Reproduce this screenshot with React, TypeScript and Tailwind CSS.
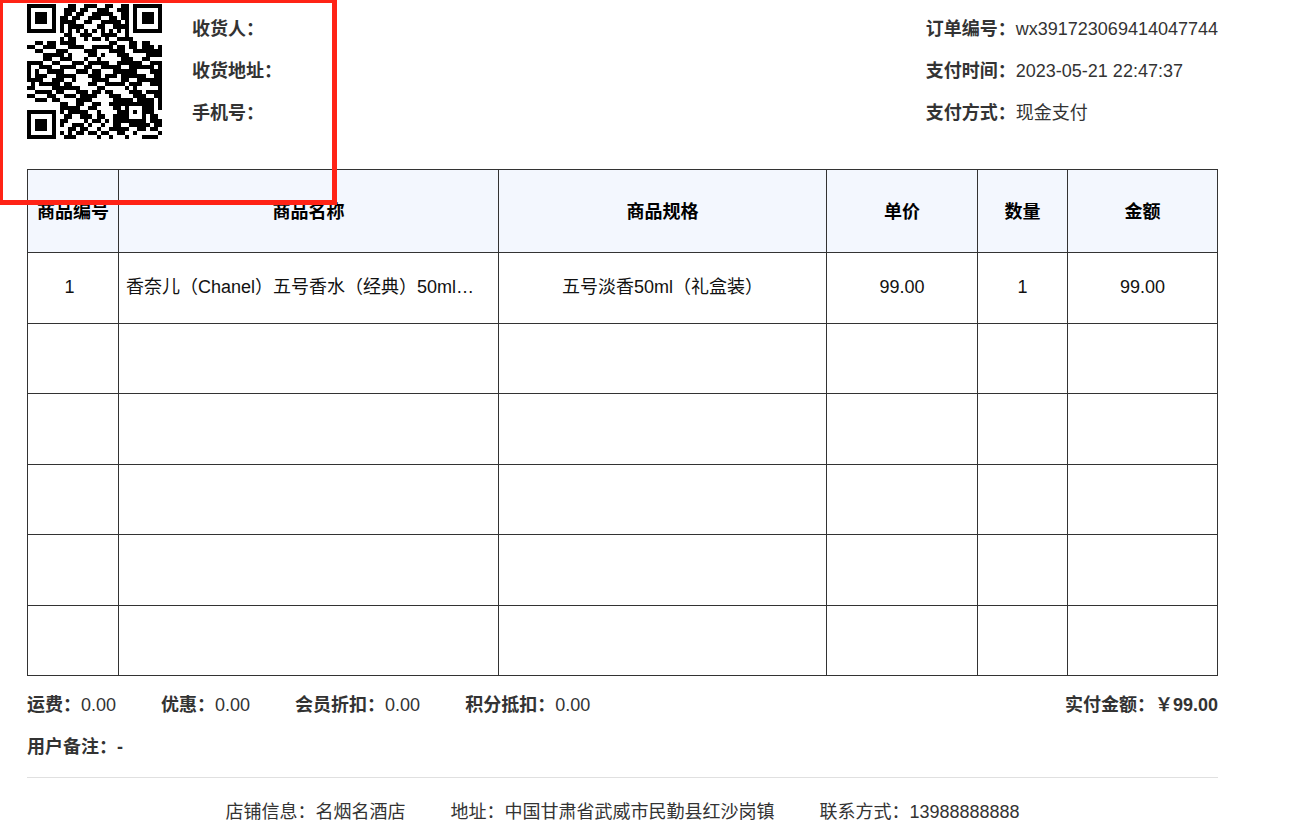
import React from "react";

const raw = [
  "000000000011001110011001100000000",
  "000000000111011001110011100000000",
  "000000000110110011111001100000000",
  "000000001101100111001101100000000",
  "000000001111001100111110100000000",
  "000000001011110001100111100000000",
  "000000001010101010101010100000000",
  "000000000110011100111100100000000",
  "000000001011001011010011110000000",
  "001101101111000000001100011011000",
  "110011100011110011111011011011101",
  "001100011100001110001111001111111",
  "000011111010000110100011100001111",
  "000011001110001001000001110011000",
  "111100110001110111110011111100111",
  "100111001111001100111110011111101",
  "101001111000111011000111111000111",
  "101110011111000111011101111110011",
  "111100111001000011110001100111111",
  "010111110110000110011111011100111",
  "110000111111100001100000101000001",
  "001111011000111011011000011101111",
  "110001100111011110001110001110011",
  "001110110000111100000111110111101",
  "000000001100110011001111101101101",
  "000000001111100110000110110011101",
  "000000001011111001000011111111100",
  "000000000110011101100111000110110",
  "000000001100001011010111111100111",
  "000000001001110100100110011111011",
  "000000000011011001001111100110110",
  "000000001010110110110011001000001",
  "000000000111000001001000100011110",
];

const grid = raw.map((r) => r.split("").map((c) => c === "1"));
const finder = (x: number, y: number) => {
  for (let j = -1; j < 8; j++) {
    for (let i = -1; i < 8; i++) {
      const a = x + i;
      const b = y + j;
      if (a < 0 || b < 0 || a > 32 || b > 32) continue;
      const on =
        i >= 0 && i < 7 && j >= 0 && j < 7 &&
        (i === 0 || i === 6 || j === 0 || j === 6 || (i >= 2 && i <= 4 && j >= 2 && j <= 4));
      grid[b][a] = on;
    }
  }
};
finder(0, 0);
finder(26, 0);
finder(0, 26);
for (let j = -2; j <= 2; j++) {
  for (let i = -2; i <= 2; i++) {
    grid[26 + j][26 + i] = Math.max(Math.abs(i), Math.abs(j)) !== 1;
  }
}

function Qr() {
  return (
    <svg width="135" height="135" viewBox="0 0 33 33" className="block mt-[4px] shrink-0" shapeRendering="crispEdges">
      {grid.flatMap((row, y) =>
        row.map((on, x) => (on ? <rect key={`${x}-${y}`} x={x} y={y} width="1" height="1" fill="#000" /> : null))
      )}
    </svg>
  );
}

const font = { fontFamily: '"Liberation Sans", "Noto Sans CJK SC", sans-serif' };

const heads = ["商品编号", "商品名称", "商品规格", "单价", "数量", "金额"];
const rowHeights = ["h-[71px]", "h-[70px]", "h-[71px]", "h-[70px]", "h-[71px]", "h-[70px]"];
const cell = "border border-[#333333] text-center pb-[1px]";

function Line({ label, value }: { label: string; value?: string }) {
  return (
    <div className="h-[42px] flex items-center whitespace-nowrap">
      <span className="font-bold">{label}</span>
      {value ? <span>{value}</span> : null}
    </div>
  );
}

export default function App() {
  return (
    <div className="relative w-[1308px] h-[840px] overflow-hidden bg-white text-[18px] text-[#333333]" style={font}>
      <div className="ml-[27px] w-[1191px]">
        <div className="flex justify-between h-[169px]">
          <div className="flex">
            <Qr />
            <div className="ml-[30px] pt-[8px]">
              <Line label="收货人：" />
              <Line label="收货地址：" />
              <Line label="手机号：" />
            </div>
          </div>
          <div className="pt-[8px]">
            <Line label="订单编号：" value="wx391723069414047744" />
            <Line label="支付时间：" value="2023-05-21 22:47:37" />
            <Line label="支付方式：" value="现金支付" />
          </div>
        </div>

        <table className="table-fixed border-collapse w-[1191px] text-[#111111]">
          <colgroup>
            <col className="w-[91px]" />
            <col className="w-[380px]" />
            <col className="w-[328px]" />
            <col className="w-[151px]" />
            <col className="w-[90px]" />
            <col className="w-[150px]" />
          </colgroup>
          <thead>
            <tr className="h-[83px] bg-[#f3f7fe]">
              {heads.map((h) => (
                <th key={h} className="border border-[#333333] text-center font-bold text-black pt-[2px]">{h}</th>
              ))}
            </tr>
          </thead>
          <tbody>
            {rowHeights.map((h, i) => (
              <tr key={i} className={h}>
                <td className={`${cell} pr-[7px]`}>{i === 0 ? "1" : ""}</td>
                <td className={`${cell} pl-[7px] !text-left whitespace-nowrap`}>
                  {i === 0 ? "香奈儿（Chanel）五号香水（经典）50ml…" : ""}
                </td>
                <td className={cell}>{i === 0 ? "五号淡香50ml（礼盒装）" : ""}</td>
                <td className={cell}>{i === 0 ? "99.00" : ""}</td>
                <td className={cell}>{i === 0 ? "1" : ""}</td>
                <td className={cell}>{i === 0 ? "99.00" : ""}</td>
              </tr>
            ))}
          </tbody>
        </table>

        <div className="flex justify-between h-[42px] mt-[8px] items-center">
          <div className="flex gap-[45px]">
            <div><span className="font-bold">运费：</span>0.00</div>
            <div><span className="font-bold">优惠：</span>0.00</div>
            <div><span className="font-bold">会员折扣：</span>0.00</div>
            <div><span className="font-bold">积分抵扣：</span>0.00</div>
          </div>
          <div className="font-bold">实付金额：￥99.00</div>
        </div>
        <div className="h-[42px] flex items-center font-bold">用户备注：-</div>
        <div className="mt-[9px] border-t border-[#e0e0e0] h-0" />
        <div className="flex justify-center gap-[45px] mt-[21px] leading-[26px]">
          <div>店铺信息：名烟名酒店</div>
          <div>地址：中国甘肃省武威市民勤县红沙岗镇</div>
          <div>联系方式：13988888888</div>
        </div>
      </div>
      <div className="absolute left-[-2px] top-[-2px] w-[339px] h-[207px] border-[5px] border-[#ff2316]" />
    </div>
  );
}
